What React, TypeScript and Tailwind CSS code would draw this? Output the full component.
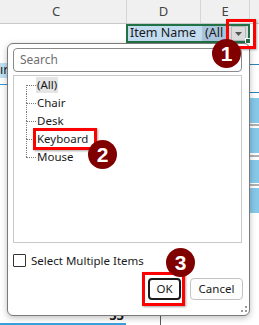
import React from "react";

const items = ["(All)", "Chair", "Desk", "Keyboard", "Mouse"];

function Badge({ n, className }: { n: string; className: string }) {
  return (
    <div
      className={`absolute w-[29px] h-[29px] rounded-full bg-[#800000] flex items-center justify-center text-white font-bold text-[21px] leading-none ${className}`}
      style={{ fontFamily: '"Liberation Sans", Arial, sans-serif' }}
    >
      {n}
    </div>
  );
}

export default function App() {
  return (
    <div
      className="relative w-[259px] h-[325px] overflow-hidden bg-white text-[#1a1a1a]"
      style={{ fontFamily: '"Noto Sans", "Open Sans", sans-serif' }}
    >
      {/* column header */}
      <div className="flex h-[24px] bg-[#f0f0f0] border-b border-[#c8c8c8] text-[13px] text-[#444]">
        <div className="w-[127px] flex items-center justify-center pr-[14px] border-r border-[#d6d6d6]">C</div>
        <div className="w-[74px] flex items-center justify-center border-r border-[#d6d6d6]">D</div>
        <div className="w-[49px] flex items-center justify-center border-r border-[#d6d6d6]">E</div>
        <div className="flex-1" />
      </div>

      {/* row 1 */}
      <div className="flex h-[19px]">
        <div className="w-[126px]" />
        <div className="relative w-[124px] border-2 border-[#217346] flex items-center text-[12.5px]">
          <div className="w-[74px] h-full flex items-center bg-[#c3dcf0] pl-[2px] whitespace-nowrap">Item Name</div>
          <div className="w-[27px] h-full flex items-center bg-[#a9c4dc] pl-[3px] whitespace-nowrap">(All</div>
          <div className="flex-1 h-full bg-[#d8dde2] flex items-center justify-center">
            <div className="w-[15px] h-[15px] bg-[#dcdcdc] border border-[#b8b8b8] flex items-center justify-center">
              <svg width="7" height="4" viewBox="0 0 7 4">
                <path d="M0 0 H7 L3.5 4 Z" fill="#555" />
              </svg>
            </div>
          </div>
          <div className="absolute right-[-3px] bottom-[-3px] w-[4px] h-[4px] bg-[#217346] border border-white box-content" />
        </div>
        <div className="flex-1" />
      </div>

      {/* body */}
      <div className="flex h-[282px]">
        <div className="w-[126px] flex flex-col">
          <div className="h-[20px]" />
          <div className="h-[15px] bg-[#bfe0f3] text-[12.5px] flex items-center whitespace-nowrap">ır</div>
          <div className="h-[6px]" />
          <div className="h-[1px] bg-[#3a96d0]" />
          <div className="flex-1" />
          <div className="h-[16px] text-right pr-[2px] font-bold text-[13px] leading-[16px]">55</div>
          <div className="h-[2px] bg-[#3aa0dc]" />
        </div>
        <div className="w-[124px] flex">
          <div className="w-[34px]" />
          <div className="flex-1 border-l border-[#5a5a5a]" />
        </div>
        <div className="flex-1 flex flex-col">
          <div className="h-[21px]" />
          <div className="h-[1px] bg-[#2e7fb8]" />
          <div className="h-[27px]" />
          <div className="h-[1px] bg-[#2e7fb8]" />
          <div className="h-[5px]" />
          <div className="h-[25px] bg-[#86c8e8]" />
          <div className="h-[1px]" />
          <div className="h-[2px] bg-[#b0b0b0]" />
          <div className="h-[2px]" />
          <div className="h-[25px] bg-[#86c8e8]" />
          <div className="h-[2px]" />
          <div className="h-[2px] bg-[#b0b0b0]" />
          <div className="h-[3px]" />
          <div className="h-[23px] bg-[#86c8e8]" />
          <div className="h-[1px]" />
          <div className="h-[2px] bg-[#b0b0b0]" />
          <div className="h-[2px]" />
          <div className="h-[25px] bg-[#86c8e8]" />
          <div className="flex-1" />
        </div>
      </div>

      {/* filter dialog */}
      <div className="absolute left-[7px] top-[43px] w-[243px] h-[273px] rounded-[6px] border border-[#7a7a7a] bg-white shadow-[0_2px_6px_rgba(0,0,0,0.25)] flex flex-col pl-[5px] pr-[6px] pt-[4px] text-[11.5px]">
        <div className="h-[24px] w-[229px] rounded-[4px] border border-[#8a8a8a] flex items-center pl-[6px] text-[#6e6e6e] text-[12px]">
          Search
        </div>
        <div className="mt-[3px] h-[168px] w-[229px] border border-[#c9c9c9] pl-[12px]">
          {items.map((it, i) => (
            <div key={it} className="flex h-[18px] items-center">
              <div className="w-[10px] h-full flex flex-col">
                <div
                  className={
                    i === 0
                      ? "h-[9px]"
                      : "h-[9px] border-l border-dotted border-[#7a7a7a]"
                  }
                />
                <div
                  className={
                    i === items.length - 1
                      ? "h-[9px] border-t border-dotted border-[#7a7a7a]"
                      : "h-[9px] border-t border-l border-dotted border-[#7a7a7a]"
                  }
                />
              </div>
              <span
                className={
                  i === 0
                    ? "h-[16px] leading-[16px] px-[1px] bg-[#e5e5e5]"
                    : "h-[16px] leading-[16px] px-[1px]"
                }
              >
                {it}
              </span>
            </div>
          ))}
        </div>
        <div className="mt-[11px] flex items-center gap-[5px] h-[13px]">
          <div className="w-[13px] h-[13px] border border-[#333] rounded-[1px]" />
          <span className="leading-[13px]">Select Multiple Items</span>
        </div>
        <div className="mt-[11px] flex justify-end gap-[9px]">
          <div className="w-[33px] h-[22px] rounded-[4px] border-2 border-[#1b1b1b] flex items-center justify-center">OK</div>
          <div className="w-[53px] h-[22px] rounded-[4px] border border-[#c3c3c3] bg-[#fdfdfd] flex items-center justify-center">Cancel</div>
        </div>
        <svg className="absolute right-[2px] bottom-[3px]" width="6" height="6" viewBox="0 0 6 6">
          <rect x="4" y="0" width="2" height="2" fill="#9a9a9a" />
          <rect x="0" y="4" width="2" height="2" fill="#9a9a9a" />
          <rect x="4" y="4" width="2" height="2" fill="#9a9a9a" />
        </svg>
      </div>

      {/* annotations */}
      <div className="absolute left-[226px] top-[19px] w-[30px] h-[30px] border-[3px] border-[#ff0000] shadow-[1px_1px_2px_rgba(0,0,0,0.35)]" />
      <div className="absolute left-[33px] top-[128px] w-[64px] h-[22px] border-[3px] border-[#ff0000] shadow-[1px_1px_2px_rgba(0,0,0,0.35)]" />
      <div className="absolute left-[142px] top-[272px] w-[43px] h-[34px] border-[3px] border-[#ff0000] shadow-[1px_1px_2px_rgba(0,0,0,0.35)]" />
      <Badge n="1" className="left-[212px] top-[39px]" />
      <Badge n="2" className="left-[88px] top-[140px]" />
      <Badge n="3" className="left-[166px] top-[248px]" />
    </div>
  );
}
